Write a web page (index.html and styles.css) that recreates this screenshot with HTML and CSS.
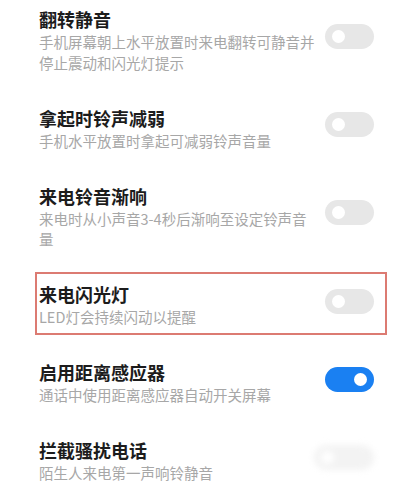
FILE: index.html
```html
<!DOCTYPE html>
<html lang="zh-CN">
<head>
<meta charset="utf-8">
<title>来电设置</title>
<link rel="stylesheet" href="styles.css">
</head>
<body>
<div class="list">
  <div class="row">
    <div class="text">
      <div class="title">翻转静音</div>
      <div class="sub">手机屏幕朝上水平放置时来电翻转可静音并停止震动和闪光灯提示</div>
    </div>
    <span class="toggle"></span>
  </div>
  <div class="row">
    <div class="text">
      <div class="title">拿起时铃声减弱</div>
      <div class="sub">手机水平放置时拿起可减弱铃声音量</div>
    </div>
    <span class="toggle"></span>
  </div>
  <div class="row">
    <div class="text">
      <div class="title">来电铃音渐响</div>
      <div class="sub">来电时从小声音3-4秒后渐响至设定铃声音量</div>
    </div>
    <span class="toggle"></span>
  </div>
  <div class="row highlight">
    <div class="text">
      <div class="title">来电闪光灯</div>
      <div class="sub">LED灯会持续闪动以提醒</div>
    </div>
    <span class="toggle"></span>
  </div>
  <div class="row">
    <div class="text">
      <div class="title">启用距离感应器</div>
      <div class="sub">通话中使用距离感应器自动开关屏幕</div>
    </div>
    <span class="toggle on"></span>
  </div>
  <div class="row">
    <div class="text">
      <div class="title">拦截骚扰电话</div>
      <div class="sub">陌生人来电第一声响铃静音</div>
    </div>
    <span class="toggle faded"></span>
  </div>
</div>
</body>
</html>
```
FILE: styles.css
```css
html, body {
  margin: 0;
  padding: 0;
  background: #ffffff;
}
body {
  width: 400px;
  height: 487px;
  overflow: hidden;
  font-family: "Noto Sans CJK SC", "Noto Sans", sans-serif;
}
.list {
  display: flex;
  flex-direction: column;
}
.row {
  position: relative;
  display: flex;
  align-items: center;
  justify-content: space-between;
  padding: 16px 26px 16.5px 39px;
}
.row:first-child {
  padding-top: 7px;
}
.text {
  width: 280px;
}
.title {
  font-size: 18px;
  line-height: 25px;
  font-weight: 700;
  color: #1c1c1c;
}
.sub {
  font-size: 14.5px;
  line-height: 20.5px;
  color: #a7a7a7;
}
.toggle {
  position: relative;
  flex: none;
  width: 49px;
  height: 25px;
  border-radius: 13px;
  background: #e7e7e7;
  margin-bottom: 7.5px;
}
.toggle::after {
  content: "";
  position: absolute;
  top: 6px;
  left: 7px;
  width: 13px;
  height: 13px;
  border-radius: 50%;
  background: #ffffff;
}
.toggle.on {
  background: #1a80f2;
}
.toggle.on::after {
  left: auto;
  right: 7.5px;
}
.toggle.faded {
  width: 60px;
  background: #f3f3f3;
  filter: blur(3px);
}
.highlight::before {
  content: "";
  position: absolute;
  left: 35px;
  right: 13px;
  top: 6px;
  bottom: 9px;
  border: 2px solid #dc7b72;
  pointer-events: none;
}
```
